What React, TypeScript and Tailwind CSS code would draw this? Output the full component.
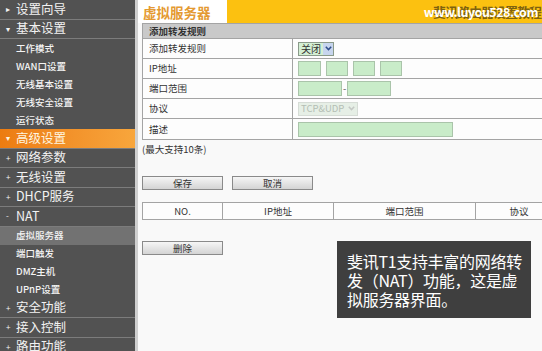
import React from 'react';

type NavItem = { label: string; kind: 'main' | 'sub'; mark?: string; active?: boolean; current?: boolean };

const nav: NavItem[] = [
  { label: '设置向导', kind: 'main', mark: '▸' },
  { label: '基本设置', kind: 'main', mark: '▾' },
  { label: '工作模式', kind: 'sub' },
  { label: 'WAN口设置', kind: 'sub' },
  { label: '无线基本设置', kind: 'sub' },
  { label: '无线安全设置', kind: 'sub' },
  { label: '运行状态', kind: 'sub' },
  { label: '高级设置', kind: 'main', mark: '▾', active: true },
  { label: '网络参数', kind: 'main', mark: '+' },
  { label: '无线设置', kind: 'main', mark: '+' },
  { label: 'DHCP服务', kind: 'main', mark: '+' },
  { label: 'NAT', kind: 'main', mark: '-' },
  { label: '虚拟服务器', kind: 'sub', current: true },
  { label: '端口触发', kind: 'sub' },
  { label: 'DMZ主机', kind: 'sub' },
  { label: 'UPnP设置', kind: 'sub' },
  { label: '安全功能', kind: 'main', mark: '+' },
  { label: '接入控制', kind: 'main', mark: '+' },
  { label: '路由功能', kind: 'main', mark: '+' },
];

const Sidebar = () => (
  <div className="flex w-[138px] shrink-0">
    <div className="flex w-[135px] flex-col bg-[#525252]">
      {nav.map((item) =>
        item.kind === 'main' ? (
          <div
            key={item.label}
            className={`flex h-[19.5px] shrink-0 items-center border-b border-[#7c7c7c] text-[12.5px] ${
              item.active ? 'bg-gradient-to-r from-[#ec7c10] to-[#f8a63c] text-[#fff6e0]' : 'text-[#f2f2f2]'
            }`}
          >
            <span className="w-[16px] pl-[6px] text-[8px] leading-none">{item.mark}</span>
            <span>{item.label}</span>
          </div>
        ) : (
          <div
            key={item.label}
            className={`flex h-[18px] shrink-0 items-center pl-[16px] text-[9.5px] font-medium text-[#f4f4f4] ${
              item.current ? 'bg-[#727272]' : ''
            }`}
          >
            {item.label}
          </div>
        )
      )}
    </div>
    <div className="w-[3px] bg-[#cfcfcf]" />
  </div>
);

const GreenBox = ({ w }: { w: string }) => (
  <div className={`${w} h-[15px] border border-[#aac4aa] bg-[#c9ecc9]`} />
);

const Chevron = ({ color }: { color: string }) => (
  <svg width="7" height="5" viewBox="0 0 7 5">
    <path d="M0.8 0.8 L3.5 3.6 L6.2 0.8" fill="none" stroke={color} strokeWidth="1.5" />
  </svg>
);

const Row = ({ label, children }: { label: string; children?: React.ReactNode }) => (
  <div className="flex h-[20px] border-b border-[#a4a4a4]">
    <div className="flex w-[150px] items-center border-r border-[#a4a4a4] pl-[6px]">{label}</div>
    <div className="flex flex-1 items-center gap-[5px] pl-[5px]">{children}</div>
  </div>
);

const Btn = ({ label }: { label: string }) => (
  <div className="flex h-[14px] w-[81px] items-center justify-center border border-[#8a8a8a] bg-gradient-to-b from-[#f6f6f6] to-[#d4d4d4] text-[9.5px] text-[#333]">
    {label}
  </div>
);

export default function App() {
  return (
    <div className="relative flex h-[351px] w-[542px] overflow-hidden bg-[#f9f9f9] font-['Noto_Sans_CJK_SC',sans-serif] text-[9.5px] text-[#333]">
      <Sidebar />
      <div className="flex min-w-0 flex-1 flex-col">
        {/* header band with watermark */}
        <div className="flex h-[23px] shrink-0 bg-white">
          <div className="w-[89px] pl-[5px] pt-[2px] text-[13.5px] font-bold text-[#e49a32]">虚拟服务器</div>
          <div className="relative flex flex-1 items-center justify-end bg-[#fcc110] pr-[1px]">
            <span className="text-[13px] font-bold tracking-[-1px] text-[#4a3a10] opacity-70">-斐讯路由器设置教程</span>
            <span className="absolute right-[4px] top-[3px] text-[12.5px] font-bold tracking-[-0.5px] text-white">
              www.luyou528.com
            </span>
          </div>
        </div>

        <div className="flex flex-col pl-[4px]">
          {/* rule form */}
          <div className="w-[420px] border-l border-t border-[#a4a4a4] bg-[#fdfdfd]">
            <div className="flex h-[15px] items-center border-b border-[#a4a4a4] bg-[#c9c9c9] pl-[6px] font-bold">
              添加转发规则
            </div>
            <Row label="添加转发规则">
              <div className="flex h-[14px] w-[36px] items-center justify-between border border-[#8a9a8a] bg-[#d4efd4] pl-[2px]">
                <span className="text-[10px]">关闭</span>
                <div className="flex h-full w-[10px] items-center justify-center bg-[#c7d5ee]">
                  <Chevron color="#2f4d8a" />
                </div>
              </div>
            </Row>
            <Row label="IP地址">
              <GreenBox w="w-[23px]" />
              <GreenBox w="w-[22px]" />
              <GreenBox w="w-[22px]" />
              <GreenBox w="w-[22px]" />
            </Row>
            <Row label="端口范围">
              <div className="flex items-center">
                <GreenBox w="w-[44px]" />
                <span className="px-[1px] text-[#555]">-</span>
                <GreenBox w="w-[44px]" />
              </div>
            </Row>
            <Row label="协议">
              <div className="flex h-[14px] w-[60px] items-center justify-between border border-[#d6dcd6] bg-[#e6efe6] pl-[2px] pr-[2px] text-[#b4beb4]">
                <span>TCP&amp;UDP</span>
                <Chevron color="#c4c8c4" />
              </div>
            </Row>
            <div className="flex h-[21px] border-b border-[#a4a4a4]">
              <div className="flex w-[150px] items-center border-r border-[#a4a4a4] pl-[6px]">描述</div>
              <div className="flex flex-1 items-center pl-[5px]">
                <GreenBox w="w-[155px]" />
              </div>
            </div>
          </div>

          <div className="mt-[2px] h-[13px]">(最大支持10条)</div>

          <div className="mt-[21px] flex gap-[9px]">
            <Btn label="保存" />
            <Btn label="取消" />
          </div>

          {/* rule list */}
          <div className="mt-[12px] flex h-[18px] w-[420px] border border-r-0 border-[#a4a4a4] bg-[#fdfdfd]">
            <div className="flex w-[80px] items-center justify-center border-r border-[#a4a4a4]">NO.</div>
            <div className="flex w-[111px] items-center justify-center border-r border-[#a4a4a4]">IP地址</div>
            <div className="flex w-[142px] items-center justify-center border-r border-[#a4a4a4]">端口范围</div>
            <div className="flex w-[86px] items-center justify-center">协议</div>
          </div>

          <div className="mt-[21px]">
            <Btn label="删除" />
          </div>
        </div>
      </div>

      {/* caption overlay */}
      <div className="absolute left-[337px] top-[241px] h-[77px] w-[194px] whitespace-nowrap bg-[#3f3f3f] pl-[10px] pt-[11px] text-[16px] leading-[19px] tracking-[-0.3px] text-white">
        <div>斐讯T1支持丰富的网络转</div>
        <div>发（NAT）功能，这是虚</div>
        <div>拟服务器界面。</div>
      </div>
    </div>
  );
}
